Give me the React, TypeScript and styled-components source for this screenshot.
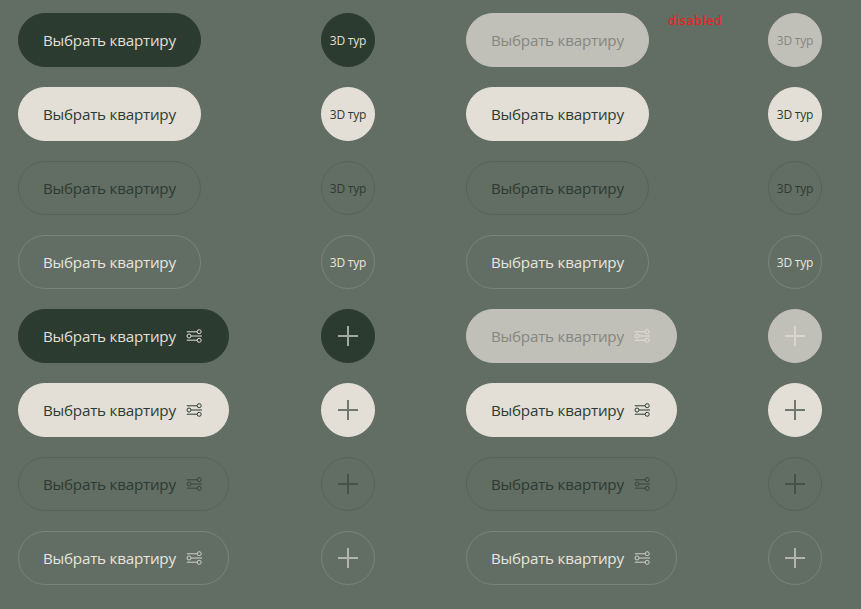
import React from "react";
import styled, { createGlobalStyle, css } from "styled-components";

type Tone = "dark" | "light" | "outlineDark" | "outlineLight" | "muted";

const GlobalStyle = createGlobalStyle`
  *, *::before, *::after { box-sizing: border-box; }
  body { margin: 0; background: #626d64; }
`;

const tones = {
  dark: css`background: #2c3b30; border-color: #2c3b30; color: #e3dfd7; --icon: #e3dfd7; --plus: #a3a9a0;`,
  light: css`background: #e3dfd7; border-color: #e3dfd7; color: #2c3b30; --icon: #2c3b30; --plus: #6f776e;`,
  outlineDark: css`background: transparent; border-color: #576259; color: #2c3b30; --icon: #35433a; --plus: #465248;`,
  outlineLight: css`background: transparent; border-color: #79837a; color: #e9e5dd; --icon: #d3d1c8; --plus: #b3b5ab;`,
  muted: css`background: #c1c0b8; border-color: #c1c0b8; color: #84877f; --icon: #e3dfd7; --plus: #d8d6ce;`,
};

const Page = styled.main`
  display: grid;
  grid-template-columns: 448px 1fr;
  height: 609px;
  padding: 13px 0 0 18px;
  background: #626d64;
  font-family: "Open Sans", "Noto Sans", sans-serif;
`;

const Group = styled.section`
  display: flex;
  flex-direction: column;
  gap: 20px;
`;

const Row = styled.div<{ $offset: number }>`
  display: grid;
  grid-template-columns: ${(p) => p.$offset}px 54px;
  height: 54px;
`;

const Cell = styled.div`
  display: flex;
  align-items: flex-start;
`;

const BaseButton = styled.button<{ $tone: Tone }>`
  display: flex;
  align-items: center;
  height: 54px;
  margin: 0;
  border: 1px solid;
  border-radius: 27px;
  font-family: inherit;
  line-height: 22px;
  white-space: nowrap;
  ${(p) => tones[p.$tone]}
`;

const PillButton = styled(BaseButton)<{ $wide: boolean }>`
  width: ${(p) => (p.$wide ? 211 : 183)}px;
  padding: 0 24px;
  gap: 10px;
  font-size: 15.2px;
  letter-spacing: -0.22px;
`;

const PillText = styled.span`
  flex: none;
  width: 133px;
  text-align: left;
`;

const RoundButton = styled(BaseButton)`
  width: 54px;
  padding: 0;
  justify-content: center;
  font-size: 12px;
`;

const RoundText = styled.span`
  padding-top: 2px;
  letter-spacing: -0.2px;
`;

const StateLabel = styled.span`
  margin: 0 0 0 19px;
  color: #e52323;
  font: 12px/16px "DejaVu Sans", sans-serif;
  letter-spacing: 0.45px;
  -webkit-text-stroke: 0.2px #e52323;
`;

const Icon = styled.svg`
  display: block;
  flex: none;
  fill: none;
  stroke: var(--icon);
`;

const PlusSvg = styled(Icon)`
  stroke: var(--plus);
`;

function FilterIcon() {
  return (
    <Icon width="18" height="18" viewBox="0 0 18 18" strokeWidth="1">
      <path d="M.8 4.8h10.4M5.2 9H16M.8 13.2h10.4" />
      <circle cx="13.2" cy="4.7" r="2" />
      <circle cx="3" cy="9" r="2" />
      <circle cx="13.2" cy="13.3" r="2" />
    </Icon>
  );
}

function PlusIcon() {
  return (
    <PlusSvg width="20" height="20" viewBox="0 0 20 20" strokeWidth="2">
      <path d="M10 0v20M0 10h20" />
    </PlusSvg>
  );
}

function ButtonGroup({ disabled = false }: { disabled?: boolean }) {
  const order: Tone[] = [disabled ? "muted" : "dark", "light", "outlineDark", "outlineLight"];
  return (
    <Group>
      {[false, true].map((withIcon) =>
        order.map((tone, i) => (
          <Row key={`${withIcon}-${tone}`} $offset={disabled ? 302 : 303}>
            <Cell>
              <PillButton $tone={tone} $wide={withIcon} disabled={disabled}>
                <PillText>Выбрать квартиру</PillText>
                {withIcon && <FilterIcon />}
              </PillButton>
              {disabled && !withIcon && i === 0 && <StateLabel>disabled</StateLabel>}
            </Cell>
            <RoundButton $tone={tone} disabled={disabled}>
              {withIcon ? <PlusIcon /> : <RoundText>3D тур</RoundText>}
            </RoundButton>
          </Row>
        ))
      )}
    </Group>
  );
}

export default function App() {
  return (
    <>
      <GlobalStyle />
      <Page>
        <ButtonGroup />
        <ButtonGroup disabled />
      </Page>
    </>
  );
}
